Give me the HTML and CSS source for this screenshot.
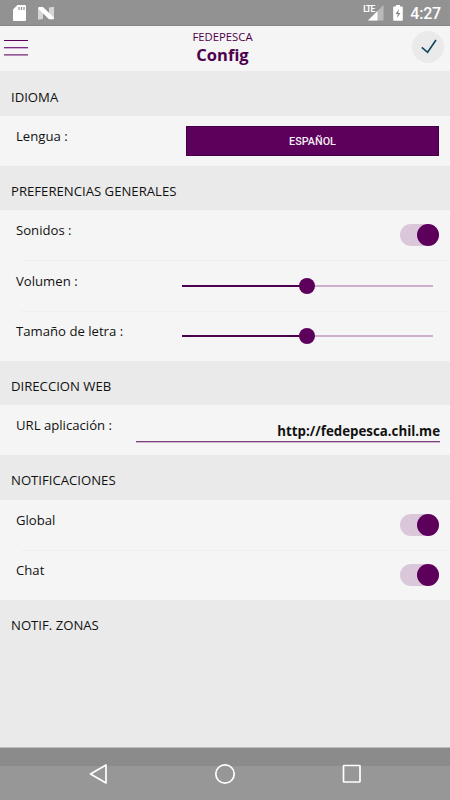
FILE: index.html
```html
<!DOCTYPE html>
<html lang="es">
<head>
  <meta charset="UTF-8">
  <meta name="viewport" content="width=device-width, initial-scale=1.0">
  <title>Config</title>
  <link rel="stylesheet" href="styles.css">
</head>
<body>
  <div class="screen">
    <!-- System status bar -->
    <div class="status-bar">
      <svg class="status-icons" width="60" height="26" viewBox="0 0 60 26">
        <path d="M17.5 5H25a1 1 0 0 1 1 1v14a1 1 0 0 1-1 1H14a1 1 0 0 1-1-1V9.500z" fill="#fff"/>
        <path d="M19 7v3M21.500 7v3M24 7v3" stroke="#929292" stroke-width="1.200"/>
        <path d="M38 7.500l5 4v7.500l-5 .8zM49 7.500l5-.8V19l-5-4z" fill="#d6d6d6"/>
        <path d="M38.500 7H43l10.800 10.500v1.800H49L38.500 9z" fill="#fff"/>
      </svg>
      <div class="status-right">
        <span class="network">LTE</span>
        <svg width="38" height="26" viewBox="0 0 38 26">
          <path d="M17.500 5v15.500H2z" fill="#b9b9b9"/>
          <path d="M11.500 11v9.500H2z" fill="#fff"/>
          <path d="M28 6.500h2V5h4v1.500h2a.8.8 0 0 1 .8.8V20a.8.800 0 0 1-.8.800h-8a.8.800 0 0 1-.8-.8V7.300a.8.800 0 0 1 .8-.8z" fill="#fff"/>
          <path d="M33 9l-3.500 5h2.300l-.8 4 3.500-5h-2.300z" fill="#858585"/>
        </svg>
        <span class="clock">4:27</span>
      </div>
    </div>

    <!-- App header -->
    <header class="header">
      <button class="menu-button" aria-label="Menu"><span></span><span></span><span></span></button>
      <div class="titles">
        <div class="app-name">FEDEPESCA</div>
        <h1>Config</h1>
      </div>
      <button class="ok-button" aria-label="OK">
        <svg width="32" height="32" viewBox="0 0 32 32">
          <path d="M9.800 16.300l5.800 5L24 9" fill="none" stroke="#12465f" stroke-width="1.600"/>
        </svg>
      </button>
    </header>

    <main class="settings">
      <h2>IDIOMA</h2>
      <div class="row">
        <label>Lengua :</label>
        <button class="language">ESPAÑOL</button>
      </div>

      <h2>PREFERENCIAS GENERALES</h2>
      <div class="row">
        <label>Sonidos :</label>
        <div class="toggle"><span></span></div>
      </div>
      <div class="row">
        <label>Volumen :</label>
        <div class="slider"><span></span></div>
      </div>
      <div class="row">
        <label>Tamaño de letra :</label>
        <div class="slider"><span></span></div>
      </div>

      <h2>DIRECCION WEB</h2>
      <div class="row">
        <label>URL aplicación :</label>
        <div class="url">http://fedepesca.chil.me</div>
      </div>

      <h2>NOTIFICACIONES</h2>
      <div class="row">
        <label>Global</label>
        <div class="toggle"><span></span></div>
      </div>
      <div class="row">
        <label>Chat</label>
        <div class="toggle"><span></span></div>
      </div>

      <h2>NOTIF. ZONAS</h2>
    </main>

    <!-- System navigation -->
    <nav class="nav-bar">
      <svg width="20" height="22" viewBox="0 0 20 22"><path d="M18 2v18L2.500 11z"/></svg>
      <svg width="22" height="22" viewBox="0 0 22 22"><circle cx="11" cy="11" r="9.200"/></svg>
      <svg width="20" height="22" viewBox="0 0 20 22"><rect x="1.500" y="2.500" width="16.500" height="16.500" rx=".5"/></svg>
    </nav>
  </div>
</body>
</html>
```

FILE: styles.css
```css
* {
  box-sizing: border-box;
}
body {
  margin: 0;
  background-color: #eaeaea;
  font-family: "Open Sans", "Noto Sans", sans-serif;
  color: #111;
}
button {
  border: 0;
  padding: 0;
}
.screen {
  display: flex;
  flex-direction: column;
  height: 800px;
  width: 450px;
}

/* Status bar */
.status-bar {
  display: flex;
  justify-content: space-between;
  height: 26px;
  background: #929292;
  border-bottom: 1px solid #858585;
  color: #fff;
  font-family: Roboto, sans-serif;
}
.status-right {
  display: flex;
  padding-right: 9px;
}
.network {
  font-size: 8.5px;
  font-weight: 700;
  line-height: 10px;
  letter-spacing: -0.9px;
  padding-top: 4px;
  margin-right: -12px;
}
.status-right svg {
  margin-left: 4px;
}
.clock {
  font-size: 16px;
  font-weight: 500;
  line-height: 27px;
  letter-spacing: -0.2px;
  margin-left: 6px;
}

/* Header */
.header {
  display: flex;
  justify-content: space-between;
  height: 45px;
  background: #f5f5f5;
}
.menu-button {
  display: flex;
  flex-direction: column;
  gap: 6px;
  width: 32px;
  padding: 14px 0 0 4px;
  background: none;
}
.menu-button span {
  height: 1px;
  width: 24px;
  background: #5c005c;
}
.menu-button span:nth-child(2) {
  background: #7d2f7d;
  box-shadow: 0 1px #cdb0cd;
}
.menu-button span:nth-child(3) {
  background: #965b96;
  box-shadow: 0 1px #b48cb4;
}
.titles {
  text-align: center;
  color: #4d004d;
  padding: 5px 0 0 1px;
}
.app-name {
  font-size: 11.3px;
  line-height: 12px;
}
h1 {
  margin: 0;
  font-size: 16.5px;
  line-height: 24px;
}
.ok-button {
  width: 32px;
  height: 32px;
  margin: 5px 6px 0 0;
  border-radius: 50%;
  background: #eaeaea;
}

/* Settings list */
.settings {
  flex: 1;
  padding-top: 0.5px;
}
h2 {
  height: 44.2px;
  margin: 0;
  padding: 3px 11px 0;
  font-size: 13.15px;
  font-weight: 400;
  line-height: 44px;
}
.row {
  display: flex;
  justify-content: space-between;
  height: 50.25px;
  padding: 0 11px 0 16px;
  background: #f5f5f5;
}
.row + .row {
  padding-top: 0.3px;
  background: linear-gradient(#efefef, #efefef) 21px 0 / 100% 1px no-repeat #f5f5f5;
}
.row label {
  font-size: 13.15px;
  line-height: 41px;
}
.language {
  width: 253px;
  height: 30px;
  margin-top: 10px;
  background: #5c005c;
  border: 1px solid #450045;
  color: #f5eef5;
  font-family: Roboto, sans-serif;
  font-size: 10.8px;
  font-weight: 500;
  padding-top: 1px;
}
.toggle {
  display: flex;
  justify-content: flex-end;
  width: 39px;
  height: 22px;
  margin-top: 14px;
  border-radius: 11px;
  background: #dac8da;
}
.toggle span {
  width: 22px;
  height: 22px;
  border-radius: 50%;
  background: #5c005c;
}
.slider {
  display: flex;
  align-items: center;
  justify-content: center;
  width: 251px;
  height: 16px;
  margin: 17px 6.500px 0 0;
  background: linear-gradient(to right, #4d004d 50%, #cdb0cd 50%) center / 100% 2px no-repeat;
}
.slider span {
  width: 16px;
  height: 16px;
  border-radius: 50%;
  background: #5c005c;
}
.url {
  width: 304px;
  height: 27px;
  margin-top: 10px;
  margin-right: -1px;
  border-bottom: 1px solid #81417f;
  box-shadow: 0 1px #cdb5cd;
  font-size: 13.3px;
  font-weight: 700;
  line-height: 32px;
  text-align: right;
}

/* Navigation bar */
.nav-bar {
  display: flex;
  justify-content: center;
  gap: 106px;
  height: 53px;
  padding-top: 15px;
  border-top: 1px solid #bdbdbd;
  background: linear-gradient(#8b8b8b 18px, #979797 18px);
}
.nav-bar svg {
  fill: none;
  stroke: #fff;
  stroke-width: 1.7;
  stroke-linejoin: round;
}
```
